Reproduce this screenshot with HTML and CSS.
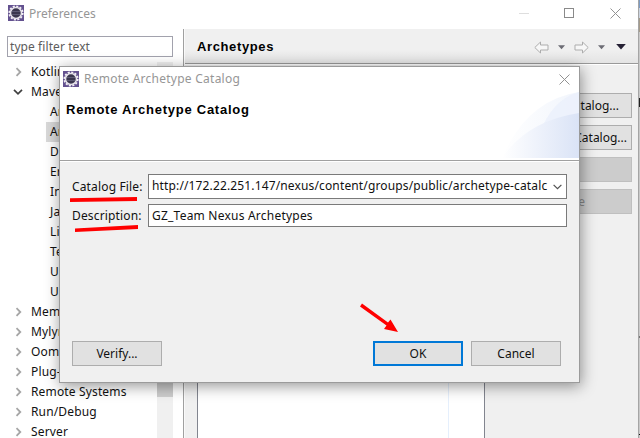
FILE: index.html
```html
<!DOCTYPE html>
<html lang="en">
<head>
<meta charset="utf-8">
<title>Preferences</title>
<link rel="stylesheet" href="styles.css">
</head>
<body>
<svg class="defs" width="0" height="0">
  <symbol id="gear" viewBox="0 0 16 16">
    <rect width="16" height="16" fill="#63518f"/>
    <circle cx="8" cy="8" r="6.7" fill="none" stroke="#f4f1f6" stroke-width="1.800" stroke-dasharray="2.1 1.408"/>
    <circle cx="8" cy="8" r="5.500" fill="#3a364e" stroke="#e6e2ea" stroke-width="1.500"/>
    <path d="M4 6.500h8M4 9.500h8" stroke="#6c6884" stroke-width=".7"/>
  </symbol>
  <symbol id="closed" viewBox="0 0 8 10"><path d="M1.5 1.2L5.3 5 1.5 8.8" fill="none" stroke="#a6a6a6" stroke-width="1.8"/></symbol>
  <symbol id="cross" viewBox="0 0 11 11"><path d="M.5 .5l10 10M10.5 .5l-10 10" stroke="#929292" fill="none"/></symbol>
  <symbol id="caret" viewBox="0 0 8 5"><path d="M0 0h8L4 4.5z" fill="currentColor"/></symbol>
</svg>
<div class="window">
  <header class="titlebar">
    <svg class="app"><use href="#gear"/></svg><span class="t-pref">Preferences</span>
    <div class="controls"><i class="min"></i><i class="max"></i><svg class="x"><use href="#cross"/></svg></div>
  </header>
  <main class="content">
    <nav class="side">
      <div class="filter"><span>type filter text</span></div>
      <div class="treebox">
        <ul class="tree">
          <li><svg><use href="#closed"/></svg><span>Kotlin</span></li>
          <li><svg class="open" viewBox="0 0 10 8"><path d="M1 1.8l4 4 4-4" fill="none" stroke="#404040" stroke-width="1.7"/></svg><span>Mave</span></li>
          <li class="sub"><span>Ar</span></li>
          <li class="sub sel"><span>Ar</span></li>
          <li class="sub"><span>Di</span></li>
          <li class="sub"><span>Er</span></li>
          <li class="sub"><span>In</span></li>
          <li class="sub"><span>Ja</span></li>
          <li class="sub"><span>Lif</span></li>
          <li class="sub"><span>Te</span></li>
          <li class="sub"><span>Us</span></li>
          <li class="sub"><span>Us</span></li>
          <li><svg><use href="#closed"/></svg><span>Mem</span></li>
          <li><svg><use href="#closed"/></svg><span>Mylyn</span></li>
          <li><svg><use href="#closed"/></svg><span>Oom</span></li>
          <li><svg><use href="#closed"/></svg><span>Plug-</span></li>
          <li><svg><use href="#closed"/></svg><span>Remote Systems</span></li>
          <li><svg><use href="#closed"/></svg><span>Run/Debug</span></li>
          <li><svg><use href="#closed"/></svg><span>Server</span></li>
        </ul>
        <div class="scroll"><i></i></div>
      </div>
    </nav>
    <section class="page">
      <div class="pagehead">
        <h1>Archetypes</h1>
        <div class="nav">
          <svg class="arrow" viewBox="0 0 15 13"><path d="M.8 6.5L6.5 1v3H14v5H6.5v3z" fill="#f7f7f7" stroke="#adadad"/></svg>
          <svg class="caret g"><use href="#caret"/></svg>
          <svg class="arrow r" viewBox="0 0 15 13"><path d="M14.2 6.5L8.500 1v3H1v5h7.500v3z" fill="#f7f7f7" stroke="#adadad"/></svg>
          <svg class="caret g"><use href="#caret"/></svg>
          <svg class="caret d"><use href="#caret"/></svg>
        </div>
      </div>
      <div class="pagebody">
        <div class="list"></div>
        <div class="actions">
          <span class="b1">Catalog...</span><span class="b2">Catalog...</span><span class="off"></span><span class="off">e</span>
        </div>
      </div>
    </section>
  </main>
</div>
<aside class="behind"></aside>
<div class="dialog">
  <div class="dtitle"><svg class="app"><use href="#gear"/></svg><span class="t-dlg">Remote Archetype Catalog</span><svg class="x"><use href="#cross"/></svg></div>
  <div class="banner">
    <h2>Remote Archetype Catalog</h2>
    <svg viewBox="0 0 77 66">
      <defs><linearGradient id="w"><stop stop-color="#fff"/><stop offset="1" stop-color="#dae3f6"/></linearGradient>
      <linearGradient id="v"><stop stop-color="#fff"/><stop offset="1" stop-color="#f1f5fc"/></linearGradient></defs>
      <path d="M0 66Q25 8 77 0V66z" fill="url(#v)"/>
      <path d="M37 43Q50 7 77 0V43z" fill="#ebf0fb" opacity=".8"/>
      <path d="M0 66Q25 29 77 21V66z" fill="url(#w)"/>
    </svg>
  </div>
  <form class="form">
    <label class="l1">Catalog File:</label>
    <div class="field combo"><span class="t-url">http://172.22.251.147/nexus/content/groups/public/archetype-catalc</span><svg viewBox="0 0 9 6"><path d="M.6.8l3.900 3.900L8.400.8" fill="none" stroke="#505050" stroke-width="1.2"/></svg></div>
    <label class="l2">Description:</label>
    <div class="field desc"><span class="t-desc">GZ_Team Nexus Archetypes</span></div>
  </form>
  <footer class="foot"><span class="btn">Verify...</span><span class="btn ok">OK</span><span class="btn">Cancel</span></footer>
</div>
<svg class="marks" viewBox="0 0 640 438" fill="#f00">
  <path d="M70 198.200L137 197v4L70 202zM75 228.500L138 225v4L75 232z"/>
  <path d="M362 303.500L388 322.500l2.500-3 7.500 12.500-14-3 2.500-3.500L360 306.500z"/>
</svg>
</body>
</html>
```
FILE: styles.css
```css
* { box-sizing: border-box; }
body { margin: 0; width: 640px; height: 438px; overflow: hidden; position: relative; background: #fff; font: 12px/20px "Noto Sans", "Open Sans", sans-serif; color: #111; display: flex; }
span, h1, h2, label { white-space: nowrap; }
svg { display: block; flex: none; }
.defs { position: absolute; }
.window { width: 639px; height: 438px; border-right: 1px solid #a5a5a5; display: flex; flex-direction: column; flex: none; overflow: hidden; }
.behind { width: 1px; background: linear-gradient(#7c9bc4 0 8px, #ccd4e0 8px 18px, #a59b8a 18px 32px, #c9c9c9 32px 98px, #222 98px 107px, #c9c9c9 107px 336px, #777 336px 338px, #c9c9c9 338px 434px, #111 434px 435px, #c9c9c9 435px); }
.titlebar { height: 29px; flex: none; display: flex; align-items: flex-start; padding: 5px 17px 0 8px; color: #969696; }
.app { width: 16px; height: 16px; }
.titlebar span { margin: -1px 0 0 5px; }
.controls { margin-left: auto; display: flex; align-items: center; height: 16px; }
.min { width: 10px; height: 1px; background: #dedede; margin-right: 35px; }
.max { width: 10px; height: 10px; border: 1px solid #8a8a8a; margin-right: 36px; }
.x { width: 11px; height: 11px; }
.content { flex: 1; display: flex; min-height: 0; }
.side { width: 184px; border-right: 1px solid #a0a0a0; padding: 7px 10px 0 7px; display: flex; flex-direction: column; flex: none; }
.filter { height: 21px; flex: none; border: 1px solid #a2a2ad; padding-left: 2px; line-height: 19px; color: #5c5c5c; letter-spacing: .08px; }
.treebox { display: flex; margin-top: 5px; flex: 1; min-height: 0; }
.tree { list-style: none; margin: 0; padding: 0; width: 150px; flex: none; letter-spacing: .15px; }
.tree li { height: 20px; display: flex; align-items: center; padding-left: 8px; }
.tree li svg { width: 8px; height: 10px; }
.tree li span { margin-left: 8px; }
.tree li svg.open { width: 10px; height: 8px; margin-left: -2px; }
.tree .sub { margin-left: 39px; padding-left: 4px; }
.tree .sub span { margin: 0; }
.sel { background: #d9d9d9; }
.scroll { width: 16px; background: #f0f0f0; display: flex; flex-direction: column; }
.scroll i { margin-top: 18px; height: 317px; background: #cdcdcd; }
.page { flex: 1; background: #f0f0f0; display: flex; flex-direction: column; border-left: 1px solid #fafafa; min-width: 0; }
.pagehead { height: 35px; flex: none; display: flex; justify-content: space-between; background: linear-gradient(#f0f0f0 60%, #e4e4e4); border-bottom: 1px solid #999; padding: 0 12px; box-shadow: 0 1px #fff; }
h1, h2 { font: bold 13px/18px "Liberation Sans", Arial, sans-serif; margin: 0; color: #000; letter-spacing: .75px; }
h1 { padding-top: 9px; letter-spacing: .62px; }
.nav { display: flex; align-items: center; height: 36px; }
.arrow { width: 15px; height: 13px; }
.caret { width: 8px; height: 5px; }
.g { color: #6c6c74; width: 7px; margin: 0 9px 0 9px; }
.g + .d { margin-left: 2px; width: 10px; height: 6px; color: #252034; }
.pagebody { flex: 1; display: flex; min-height: 0; }
.list { width: 288px; margin: 10px 0 0 12px; border: 1px solid #82858f; border-width: 1px 1px 0; background: linear-gradient(90deg, #fff 250px, #e5effc 250px 251px, #fff 251px); flex: none; }
.actions { margin: 29px 6px 0 8px; flex: 1; display: grid; grid-auto-rows: 25px; gap: 7px; align-content: start; }
.actions span { border: 1px solid #adadad; background: #e1e1e1; line-height: 23px; text-align: center; }
.actions .b1, .actions .b2 { text-align: right; padding-right: 12px; }
.actions .b2 { padding-right: 4px; }
.actions .off { background: #ccc; border-color: #bfbfbf; color: #888; text-align: right; padding-right: 46px; }
.dialog { position: absolute; left: 59px; top: 66px; width: 521px; height: 317px; border: 1px solid #9b9b9b; background: #f0f0f0; display: flex; flex-direction: column; box-shadow: 1px 3px 14px rgba(0,0,0,.42); }
.dtitle { height: 25px; flex: none; background: #fff; display: flex; align-items: flex-start; padding: 4px 9px 0 3px; color: #969696; letter-spacing: .25px; }
.dtitle span { margin: -2px 0 0 5px; }
.dtitle .x { margin: 3px 0 0 auto; }
.banner { height: 69px; flex: none; background: #fff; border-bottom: 1px solid #a0a0a0; box-shadow: 0 1px #fff; display: flex; justify-content: space-between; }
.banner h2 { padding: 9px 0 0 6px; }
.banner svg { width: 77px; height: 66px; }
.form { display: grid; grid-template-columns: 76px 419px; grid-template-rows: 25px 23px; row-gap: 5px; padding: 13px 0 0 12px; }
.form label { line-height: 26px; letter-spacing: .15px; }
.form .l2 { line-height: 24px; }
.field { background: #fff; border: 1px solid #7a7a7a; display: flex; justify-content: space-between; align-items: center; padding: 0 4px 0 3px; }
.combo span { margin-top: -2px; letter-spacing: .14px; }
.combo svg { width: 9px; height: 6px; }
.desc span { letter-spacing: .22px; margin-top: 1px; }
.foot { margin-top: auto; padding: 0 18px 16px 12px; display: flex; gap: 8px; }
.btn { width: 90px; height: 25px; border: 1px solid #adadad; background: #e1e1e1; text-align: center; line-height: 23px; }
.ok { margin-left: auto; border: 2px solid #0078d7; line-height: 21px; }
.marks { position: absolute; left: 0; top: 0; width: 640px; height: 438px; }
```
